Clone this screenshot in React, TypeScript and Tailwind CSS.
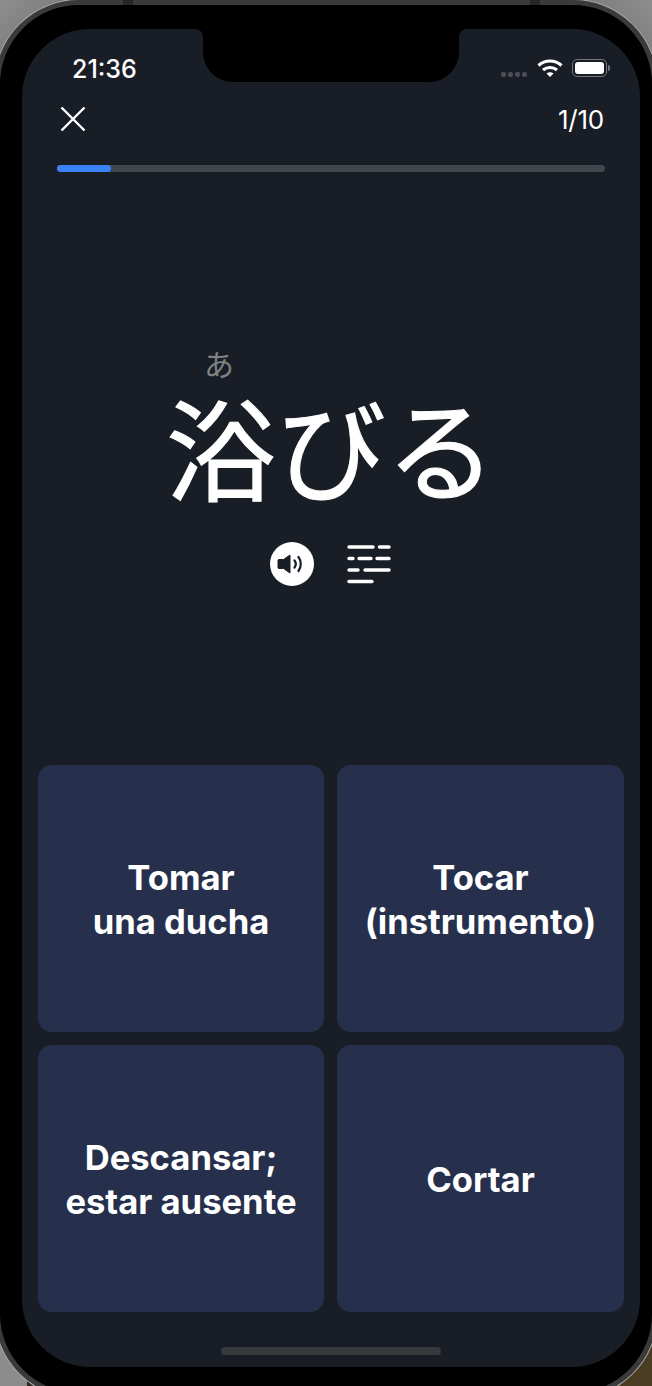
const cards = [
  ["Tomar", "una ducha"],
  ["Tocar", "(instrumento)"],
  ["Descansar;", "estar ausente"],
  ["Cortar"],
];

const StatusBar = () => {
  return (
    <div className="h-[63px] flex justify-between relative">
      <span className="pl-[50px] pt-[25px] text-[25px] leading-[30px] font-medium text-white">21:36</span>
      <div className="absolute left-[173px] top-0 size-[8px] bg-black">
        <div className="size-full bg-[#191e26] rounded-tr-[8px]" />
      </div>
      <div className="absolute left-[181px] top-0 w-[256px] h-[53px] bg-black rounded-b-[30px]" />
      <div className="absolute left-[437px] top-0 size-[8px] bg-black">
        <div className="size-full bg-[#191e26] rounded-tl-[8px]" />
      </div>
      <div className="pr-[30px] pt-[28px] flex items-start gap-[8px]">
        <div className="flex gap-[2px] mt-[15px] mr-[2px]">
          <span className="size-[5px] rounded-[2px] bg-[#4b4e54]" />
          <span className="size-[5px] rounded-[2px] bg-[#4b4e54]" />
          <span className="size-[5px] rounded-[2px] bg-[#4b4e54]" />
          <span className="size-[5px] rounded-[2px] bg-[#4b4e54]" />
        </div>
        <svg width="26" height="20" viewBox="0 0 26 20" fill="none" className="mt-[1px] mr-[1px]">
          <path d="M1.5 7.5C8 1.5 18 1.5 24.5 7.5" stroke="#fff" strokeWidth="3.2" />
          <path d="M6 12C10 8.5 16 8.5 20 12" stroke="#fff" strokeWidth="3" />
          <path d="M9.5 15.5L13 19L16.5 15.5C14.5 13.8 11.5 13.8 9.5 15.5Z" fill="#fff" />
        </svg>
        <div className="flex items-center mt-[2px]">
          <div className="w-[35px] h-[18px] rounded-[5px] border border-[#74777c] p-[2px]">
            <div className="w-full h-full rounded-[3px] bg-white" />
          </div>
          <span className="ml-[1px] w-[2px] h-[6px] rounded-r-[2px] bg-[#74777c]" />
        </div>
      </div>
    </div>
  );
};

export default function App() {
  return (
    <div className="w-[652px] h-[1386px] bg-[#6e6e6e] overflow-hidden relative font-['Inter',sans-serif]">
      <div className="absolute left-0 top-0 size-[90px] bg-gradient-to-br from-[#8e8e8e] to-[#626262]" />
      <div className="absolute right-0 top-0 size-[90px] bg-gradient-to-bl from-[#8e8e8e] to-[#626262]" />
      <div className="absolute left-0 bottom-0 w-[27px] h-[60px] bg-[#8c8c8c]" />
      <div className="absolute left-[27px] bottom-0 w-[40px] h-[30px] bg-[#2e2a22]" />
      <div className="absolute right-0 bottom-0 size-[60px] bg-[#4a3c22]" />
      <div className="relative w-[662px] h-[1398px] -ml-[5px] pl-[22px] pt-[24px] bg-black rounded-[84px] border-[5px] border-[#3a3a3a] shadow-[0_0_0_1px_#a8a8a8]">
        <div className="w-[618px] h-[1338px] rounded-[68px] bg-[#191e26] overflow-hidden flex flex-col">
          <StatusBar />
          <div className="h-[73px] flex items-start justify-between pl-[38px] pr-[36px] pt-[12px]">
            <svg width="26" height="26" viewBox="0 0 26 26" fill="none" stroke="#fff" strokeWidth="2.4" className="mt-[2px]">
              <path d="M1.5 1.5L24.5 24.5M24.5 1.5L1.5 24.5" />
            </svg>
            <span className="text-[26px] leading-[30px] text-white tracking-[-0.2px] mt-[1px]">1/10</span>
          </div>
          <div className="mx-[35px] h-[7px] rounded-full bg-[#42464d]">
            <div className="w-[54px] h-full rounded-full bg-[#3b82f6]" />
          </div>
          <div className="h-[593px] flex flex-col items-center">
            <div className="w-[330px] pl-[38px] pt-[174px] text-[30px] leading-[34px] text-[#808285] font-['Noto_Sans_CJK_JP',sans-serif]">あ</div>
            <div className="text-[110px] leading-[110px] text-white mt-[10px] font-['Noto_Sans_CJK_JP',sans-serif] font-normal [-webkit-text-stroke:1px_white]">浴びる</div>
            <div className="flex items-center gap-[33px] mt-[42px] mr-[2px]">
              <div className="size-[44px] rounded-full bg-white">
                <svg width="44" height="44" viewBox="0 0 44 44" fill="none">
                  <path d="M9 17.5H13.5L20 13V31L13.5 26.5H9C8.4 26.5 8 26 8 25.5V18.5C8 18 8.4 17.5 9 17.5Z" fill="#191e26" stroke="#191e26" strokeLinejoin="round" />
                  <path d="M24.5 18.5C26 20.5 26 23.5 24.5 25.5" stroke="#191e26" strokeWidth="2.2" strokeLinecap="round" />
                  <path d="M28.5 15C31.5 19 31.5 25 28.5 29" stroke="#191e26" strokeWidth="2.2" strokeLinecap="round" />
                </svg>
              </div>
              <svg width="44" height="39" viewBox="0 0 44 39" stroke="#fff" strokeWidth="3.4" strokeLinecap="round">
                <path d="M2 2H26M32.5 2H42" />
                <path d="M2 13.5H6M12 13.5H24M30 13.5H42" />
                <path d="M2 25H11M18 25H42" />
                <path d="M2 36.5H25" />
              </svg>
            </div>
          </div>
          <div className="grid grid-cols-[286px_287px] gap-[13px] px-[16px]">
            {cards.map((lines) => (
              <div key={lines[0]} className="h-[267px] rounded-[14px] bg-[#26304c] flex flex-col items-center justify-center text-white font-bold text-[34.6px] leading-[44px] text-center">
                {lines.map((line) => (
                  <span key={line}>{line}</span>
                ))}
              </div>
            ))}
          </div>
          <div className="mt-[35px] mx-auto w-[220px] h-[8px] rounded-full bg-[#38393d]" />
        </div>
      </div>
      <div className="absolute left-[123px] top-0 w-[10px] h-[5px] bg-[#262626]" />
      <div className="absolute left-[530px] top-0 w-[10px] h-[5px] bg-[#262626]" />
    </div>
  );
}
